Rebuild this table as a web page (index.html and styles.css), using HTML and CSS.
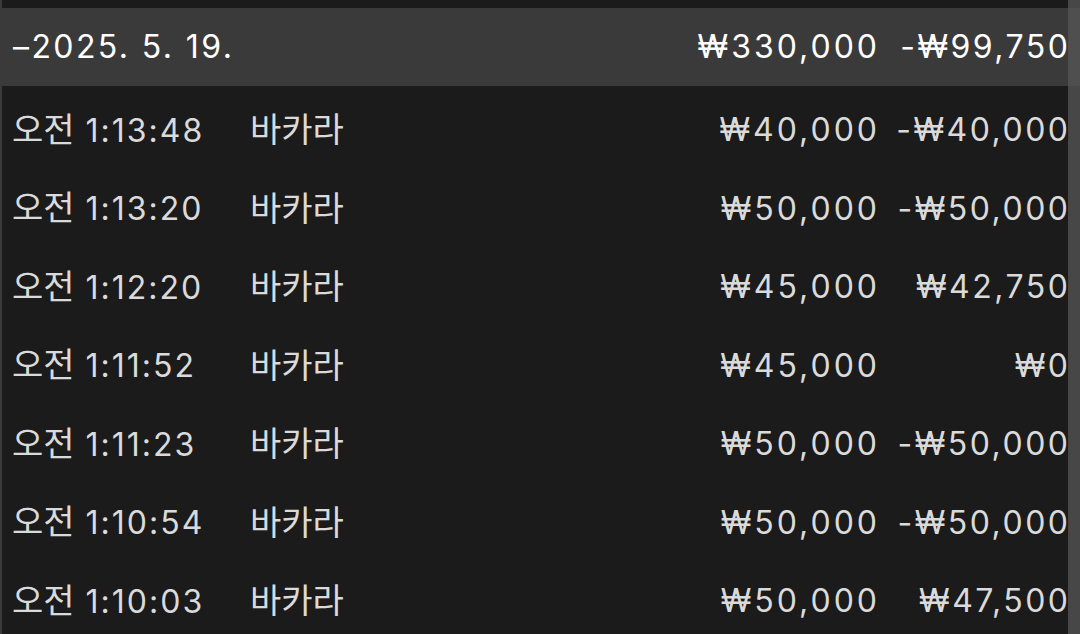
FILE: index.html
```html
<!DOCTYPE html>
<html lang="ko">
<head>
  <meta charset="UTF-8" />
  <title>기록</title>
  <link rel="stylesheet" href="styles.css">
</head>
<body>
  <div class="screen">
    <div class="list">
      <div class="row header">
        <div class="date">–2025. 5. 19.</div>
        <div class="bet">₩330,000</div>
        <div class="result">-₩99,750</div>
      </div>

      <div class="row">
        <div class="time"><span class="ampm">오전</span> 1:13:48</div>
        <div class="game">바카라</div>
        <div class="bet">₩40,000</div>
        <div class="result">-₩40,000</div>
      </div>
      <div class="row">
        <div class="time"><span class="ampm">오전</span> 1:13:20</div>
        <div class="game">바카라</div>
        <div class="bet">₩50,000</div>
        <div class="result">-₩50,000</div>
      </div>
      <div class="row">
        <div class="time"><span class="ampm">오전</span> 1:12:20</div>
        <div class="game">바카라</div>
        <div class="bet">₩45,000</div>
        <div class="result">₩42,750</div>
      </div>
      <div class="row">
        <div class="time"><span class="ampm">오전</span> 1:11:52</div>
        <div class="game">바카라</div>
        <div class="bet">₩45,000</div>
        <div class="result">₩0</div>
      </div>
      <div class="row">
        <div class="time"><span class="ampm">오전</span> 1:11:23</div>
        <div class="game">바카라</div>
        <div class="bet">₩50,000</div>
        <div class="result">-₩50,000</div>
      </div>
      <div class="row">
        <div class="time"><span class="ampm">오전</span> 1:10:54</div>
        <div class="game">바카라</div>
        <div class="bet">₩50,000</div>
        <div class="result">-₩50,000</div>
      </div>
      <div class="row">
        <div class="time"><span class="ampm">오전</span> 1:10:03</div>
        <div class="game">바카라</div>
        <div class="bet">₩50,000</div>
        <div class="result">₩47,500</div>
      </div>
    </div>
    <div class="scrollbar">
      <div class="thumb"></div>
    </div>
  </div>
</body>
</html>
```

FILE: styles.css
```css
* {
  margin: 0;
  padding: 0;
  box-sizing: border-box;
}

body {
  background: #1b1b1b;
  color: #dadada;
  font-family: 'Inter', 'Noto Sans CJK KR', sans-serif;
  overflow: hidden;
}

.screen {
  display: flex;
  height: 634px;
  padding-top: 8px;
  border-left: 2px solid #3a3a3a;
}

.list {
  flex: 1;
}

/* === Rows === */
.row {
  display: grid;
  grid-template-columns: 238px 1fr 200px 191px;
  align-items: center;
  height: 78.5px;
  padding: 10px 0 0 10px;
  font-size: 32px;
  line-height: 40px;
  white-space: nowrap;
}

.row.header {
  height: 78px;
  padding-top: 0;
  background: #3a3a3a;
  color: #fff;
}

.date {
  grid-column: 1 / 3;
  padding-left: 1px;
  letter-spacing: 2.4px;
}

.time {
  letter-spacing: 2px;
}

.ampm,
.game {
  font-size: 34px;
  letter-spacing: 0;
}

.bet,
.result {
  text-align: right;
  letter-spacing: 3px;
  margin-right: -3px;
}

.result {
  letter-spacing: 2.5px;
  margin-right: -2.5px;
}

/* === Scrollbar strip === */
.scrollbar {
  width: 12px;
  background: #474747;
  margin-top: -8px;
  padding-top: 8px;
}

.thumb {
  height: 78px;
  background: #4f4f4f;
}
```
